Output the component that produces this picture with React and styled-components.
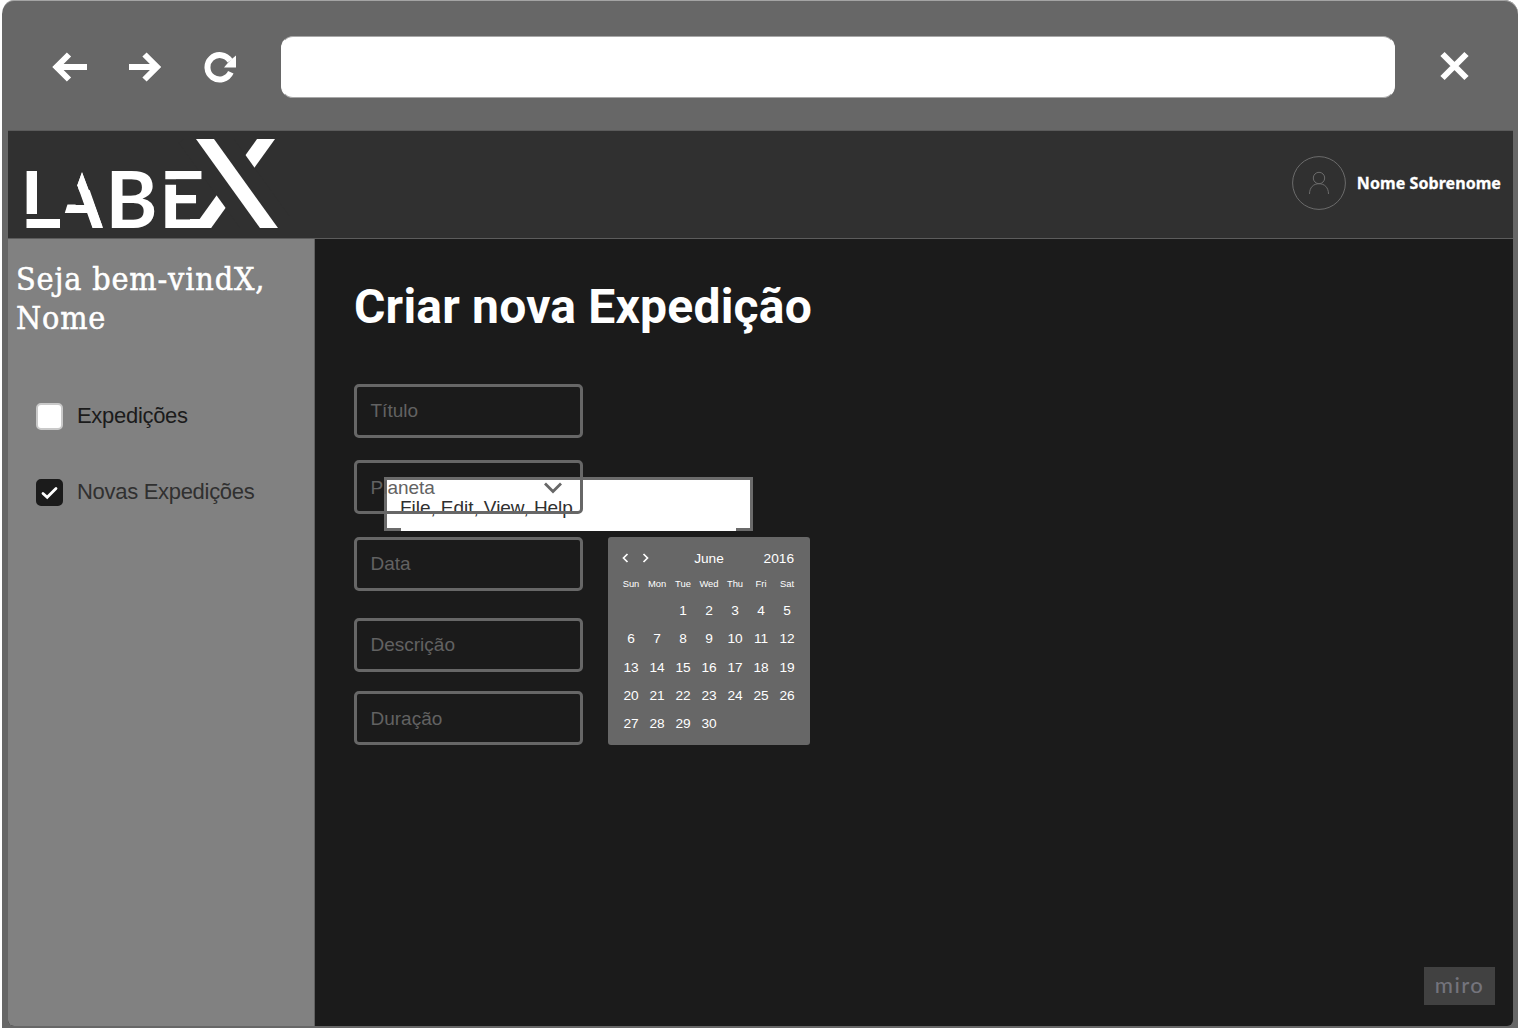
import React from "react";
import styled, { createGlobalStyle, css } from "styled-components";

const GlobalStyle = createGlobalStyle`
  * { box-sizing: border-box; }
  body { margin: 0; background: #fff; font-family: "Liberation Sans", Arial, sans-serif; }
  h1, h2, p { margin: 0; }
`;

const Browser = styled.div`
  width: 1518px;
  height: 1028px;
  padding: 0 5px 2px 6px;
  border-left: 2px solid #fff;
  background: #676767;
  background-clip: padding-box;
  border-radius: 14px 14px 0 0;
  box-shadow: inset 0 1px 0 #a4a4a4;
  display: flex;
  flex-direction: column;
  overflow: hidden;
`;

const Toolbar = styled.div`
  height: 131px;
  flex: none;
  padding: 4px 43px 0 44px;
  display: flex;
  align-items: center;
  border-bottom: 1px solid #5b5b5b;
`;

const ToolIcon = styled.svg`
  display: block;
  flex: none;
  width: ${(p) => p.$w}px;
  height: 32px;
  margin-right: ${(p) => p.$gap || 0}px;
  fill: none;
  stroke: #fff;
  stroke-width: 6;
`;

const AddressBar = styled.div`
  width: 1114px;
  height: 62px;
  margin: 0 44.5px 0 0;
  background: #fff;
  border: 1px solid #fff;
  border-color: #a8a8a8 #fff;
  border-radius: 12px;
`;

const Page = styled.div`
  flex: 1;
  display: flex;
  flex-direction: column;
  overflow: hidden;
  border-radius: 0 0 6px 6px;
  background: #1b1b1b;
`;

const Header = styled.header`
  height: 108px;
  flex: none;
  display: flex;
  justify-content: space-between;
  background: #303030;
  border-bottom: 1px solid #5c5c5c;
`;

const LogoArt = styled.svg`
  display: block;
  width: 290px;
  height: 107px;
  font-family: Lato, sans-serif;
  font-weight: 700;
  fill: #fff;
`;

const User = styled.div`
  display: flex;
  align-items: center;
  gap: 11px;
  padding: 0 12px 3px 0;
  font: 700 16px "Noto Sans", "Open Sans", sans-serif;
  letter-spacing: 0.07px;
  -webkit-text-stroke: 0.3px #fff;
  color: #fff;
`;

const Avatar = styled.svg`
  width: 54px;
  height: 54px;
  fill: none;
  stroke: #6c6c6c;
  stroke-width: 1;
`;

const Body = styled.div`
  flex: 1;
  display: flex;
`;

const Sidebar = styled.aside`
  width: 307px;
  flex: none;
  padding: 21px 0 0 8px;
  background: #818181;
  border-right: 1px solid #626262;
`;

const Welcome = styled.h2`
  font: 400 32px/39px "DejaVu Serif Condensed", "DejaVu Serif", serif;
  font-stretch: condensed;
  letter-spacing: 0.85px;
  -webkit-text-stroke: 0.5px #fff;
  white-space: nowrap;
  color: #fff;
`;

const Nav = styled.nav`
  display: flex;
  flex-direction: column;
  gap: 49px;
  padding: 65px 0 0 20px;
`;

const NavItem = styled.label`
  display: flex;
  align-items: center;
  gap: 14px;
  height: 27px;
  font-size: 22px;
  letter-spacing: -0.3px;
  color: ${(p) => (p.$active ? "#303030" : "#1b1b1b")};
`;

const NavText = styled.span`
  padding-bottom: 2px;
`;

const Box = styled.span`
  width: 27px;
  height: 27px;
  border-radius: 5px;
  display: grid;
  place-items: center;
  background: #fff;
  border: 2px solid #c9c9c9;
  ${(p) =>
    p.$checked &&
    css`
      background: #1b1b1b;
      border-color: #1b1b1b;
    `}
`;

const Main = styled.main`
  position: relative;
  flex: 1;
  padding: 39px 0 0 39px;
`;

const Title = styled.h1`
  font: 700 48px/58px Roboto, sans-serif;
  letter-spacing: 0.2px;
  color: #fff;
  white-space: nowrap;
`;

const FormRow = styled.div`
  display: flex;
  align-items: flex-end;
  gap: 25px;
  margin-top: 48px;
`;

const Fields = styled.div`
  display: flex;
  flex-direction: column;
`;

const FieldSlot = styled.div`
  position: relative;
  margin-bottom: ${(p) => p.$gap || 0}px;
`;

const Field = styled.div`
  position: relative;
  display: flex;
  align-items: center;
  justify-content: space-between;
  width: 229px;
  height: 54px;
  padding: ${(p) => (p.$low ? "1px 18px 0 13.5px" : "0 18px 1px 13.5px")};
  border: 3px solid #676767;
  border-radius: 5px;
  font-size: 19px;
  color: #626262;
`;

const Menu = styled.div`
  position: absolute;
  left: 30px;
  top: 17px;
  width: 369px;
  height: 54px;
  padding: 17px 0 0 13px;
  background:
    linear-gradient(#6b6b6b, #6b6b6b) left bottom / 14px 3px no-repeat,
    linear-gradient(#6b6b6b, #6b6b6b) right bottom / 14px 3px no-repeat,
    #fff;
  border: 3px solid #6b6b6b;
  border-bottom: 0;
  font-size: 19px;
  line-height: 22px;
  letter-spacing: -0.05px;
  color: #303030;
  white-space: nowrap;
`;

const Calendar = styled.div`
  width: 202px;
  height: 208px;
  padding: 10px 10px 0 10px;
  background: #676767;
  border-radius: 3px;
  color: #fff;
  font-size: 13.7px;
`;

const CalendarHead = styled.div`
  display: grid;
  grid-template-columns: 60px 62px 1fr;
  align-items: center;
  height: 23px;
  text-align: center;
`;

const Arrows = styled.svg`
  display: block;
  width: 40px;
  height: 12px;
  margin-bottom: 1px;
  fill: none;
  stroke: #fff;
  stroke-width: 1.7;
`;

const Year = styled.span`
  text-align: right;
  padding-right: 6px;
`;

const Week = styled.div`
  display: grid;
  grid-template-columns: repeat(7, 26px);
  align-items: center;
  text-align: center;
  height: ${(p) => (p.$names ? 26.5 : 28.3)}px;
  font-size: ${(p) => (p.$names ? "9.4px" : "inherit")};
  white-space: nowrap;
`;

const Badge = styled.div`
  position: absolute;
  right: 18px;
  bottom: 21px;
  width: 71px;
  height: 38px;
  display: grid;
  place-items: center;
  padding-bottom: 2px;
  background: #414141;
  color: #74747c;
  font: 500 22px/1 Lato, sans-serif;
  letter-spacing: 1.4px;
`;

const Logo = () => (
  <LogoArt viewBox="8 131 290 107" role="img" aria-label="LABEX">
    <defs>
      <clipPath id="band">
        <rect x="150" y="139" width="140" height="89" />
      </clipPath>
      <clipPath id="foot">
        <rect x="70" y="190" width="40" height="38" />
      </clipPath>
    </defs>
    <g clipPath="url(#band)" fill="none">
      <path d="M273.200 129L195 238" stroke="#fff" strokeWidth="14.600" />
      <path d="M197.800 129L276.200 238" stroke="#303030" strokeWidth="47" />
      <path d="M197.800 129L276.200 238" stroke="#fff" strokeWidth="14.600" />
      <path d="M190 223.500H206" stroke="#fff" strokeWidth="9" />
    </g>
    <text transform="translate(19.500 228) scale(1.13 1)" fontSize="79">L</text>
    <path d="M37 168H48V214H66V219H22V214H37Z" fill="#303030" />
    <path d="M26.800 223.500H63" stroke="#fff" strokeWidth="9" />
    <text transform="translate(60.500 228) scale(0.79 1)" fontSize="79">A</text>
    <g fill="#303030">
      <path d="M66 168H110V229H103.400L82 172L77.300 185.200L83.700 204.500H66Z" />
      <path d="M60 213H88V229H60Z" />
    </g>
    <path d="M82 172.500L98 215L97.800 228H92.500L77.300 185.200Z" />
    <path d="M82.500 184L98 228" stroke="#fff" strokeWidth="9.500" clipPath="url(#foot)" />
    <path d="M69 209H88" stroke="#fff" strokeWidth="8" />
    <text transform="translate(105.500 228)" fontSize="79">B</text>
    <text transform="translate(159 228)" fontSize="79">E</text>
    <path d="M160 182H203" stroke="#303030" strokeWidth="5.500" />
  </LogoArt>
);

const days = Array.from({ length: 35 }, (_, i) => (i > 1 && i < 32 ? i - 1 : ""));
const weeks = [0, 1, 2, 3, 4].map((w) => days.slice(w * 7, w * 7 + 7));

export default function App() {
  return (
    <>
      <GlobalStyle />
      <Browser>
        <Toolbar>
          <ToolIcon $w={37} $gap={39} viewBox="0 0 37 32">
            <path d="M17 3.500L4.500 16L17 28.500M4 16H35" />
          </ToolIcon>
          <ToolIcon $w={37} $gap={39} viewBox="0 0 37 32">
            <path d="M16.500 3.500L29 16L16.500 28.500M30 16H1" />
          </ToolIcon>
          <ToolIcon $w={33} $gap={44} viewBox="0 -0.800 33 32">
            <path d="M26.800 20.500A12.200 12.200 0 1 1 26 9" />
            <path d="M32 3.800V15.800H20L24 11L27.500 7.500Z" fill="#fff" stroke="none" />
          </ToolIcon>
          <AddressBar />
          <ToolIcon $w={30} viewBox="0.500 0 30 32">
            <path d="M3 3L27 27M27 3L3 27" />
          </ToolIcon>
        </Toolbar>
        <Page>
          <Header>
            <Logo />
            <User>
              <Avatar viewBox="0 0 54 54">
                <circle cx="27" cy="27" r="26.400" />
                <circle cx="27" cy="22" r="5.700" />
                <path d="M17.500 38C17.500 31.500 21.500 27.700 27 27.700S36.500 31.500 36.500 38" />
              </Avatar>
              <span>Nome Sobrenome</span>
            </User>
          </Header>
          <Body>
            <Sidebar>
              <Welcome>
                Seja bem-vindX,
                <br />
                Nome
              </Welcome>
              <Nav>
                <NavItem>
                  <Box />
                  <NavText>Expedições</NavText>
                </NavItem>
                <NavItem $active>
                  <Box $checked>
                    <svg width="17" height="14" viewBox="0 0 17 14" fill="none" stroke="#fff" strokeWidth="2.800" strokeLinecap="round">
                      <path d="M2 7.500L6.200 11.300L15 2.500" />
                    </svg>
                  </Box>
                  <NavText>Novas Expedições</NavText>
                </NavItem>
              </Nav>
            </Sidebar>
            <Main>
              <Title>Criar nova Expedição</Title>
              <FormRow>
                <Fields>
                  <FieldSlot $gap={22}>
                    <Field>Título</Field>
                  </FieldSlot>
                  <FieldSlot $gap={23}>
                    <Menu>File, Edit, View, Help</Menu>
                    <Field $low>
                      Planeta
                      <svg width="18" height="12" viewBox="0 0 18 12" fill="none" stroke="#676767" strokeWidth="2.800">
                        <path d="M1 1.500L9 9.500L17 1.500" />
                      </svg>
                    </Field>
                  </FieldSlot>
                  <FieldSlot $gap={27}>
                    <Field>Data</Field>
                  </FieldSlot>
                  <FieldSlot $gap={19}>
                    <Field>Descrição</Field>
                  </FieldSlot>
                  <FieldSlot>
                    <Field $low>Duração</Field>
                  </FieldSlot>
                </Fields>
                <Calendar>
                  <CalendarHead>
                    <Arrows viewBox="0 0 40 12">
                      <path d="M9.500 2L5.500 6L9.500 10M25.500 2L29.500 6L25.500 10" />
                    </Arrows>
                    <span>June</span>
                    <Year>2016</Year>
                  </CalendarHead>
                  <Week $names>
                    {["Sun", "Mon", "Tue", "Wed", "Thu", "Fri", "Sat"].map((d) => (
                      <span key={d}>{d}</span>
                    ))}
                  </Week>
                  {weeks.map((w, i) => (
                    <Week key={i}>
                      {w.map((d, j) => (
                        <span key={j}>{d}</span>
                      ))}
                    </Week>
                  ))}
                </Calendar>
              </FormRow>
              <Badge>miro</Badge>
            </Main>
          </Body>
        </Page>
      </Browser>
    </>
  );
}
